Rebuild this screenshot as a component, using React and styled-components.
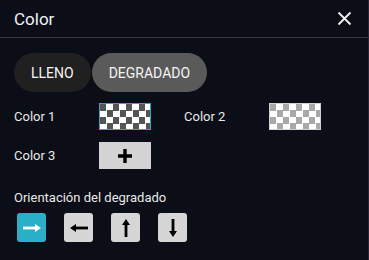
import React, { useState } from "react";
import styled, { createGlobalStyle } from "styled-components";

const GlobalStyle = createGlobalStyle`
  html, body {
    margin: 0;
    padding: 0;
    background: #0b0e17;
  }
  body {
    font-family: Roboto, "Liberation Sans", sans-serif;
    color: #ececec;
  }
`;

const Panel = styled.section`
  width: 368px;
  height: 260px;
  background: #0b0e17;
  border-right: 1px solid #2a2536;
  box-sizing: content-box;
`;

const Header = styled.header`
  height: 37px;
  display: flex;
  align-items: center;
  justify-content: space-between;
  padding: 0 14px;
  border-bottom: 1px solid #3b3b3b;
`;

const Title = styled.h1`
  margin: 0;
  font-size: 17px;
  font-weight: 400;
  color: #f2f2f2;
`;

const CloseBtn = styled.button`
  border: none;
  background: none;
  padding: 0;
  margin-right: 1px;
  width: 16px;
  height: 16px;
  cursor: pointer;
  display: flex;
`;

const Body = styled.div`
  padding: 15px 14px 0;
`;

const Tabs = styled.div`
  display: flex;
  margin-bottom: 11px;
`;

const Tab = styled.button`
  height: 39px;
  padding: 0 17px;
  border: none;
  border-radius: 20px;
  font-family: inherit;
  font-size: 14px;
  color: #f4f4f4;
  background: ${(p) => (p.active ? "#5a5a5a" : "#202020")};
  cursor: pointer;
  & + & {
    margin-left: 1px;
  }
`;

const Grid = styled.div`
  display: grid;
  grid-template-columns: 85px 85px 85px 52px;
  row-gap: 12px;
  align-items: center;
`;

const Label = styled.span`
  font-size: 13px;
  color: #e8e8e8;
`;

const Swatch = styled.div`
  width: 52px;
  height: 27px;
  box-sizing: border-box;
  border: 1px solid ${(p) => p.border};
  background: conic-gradient(
      #fff 0 25%,
      ${(p) => p.dark} 0 50%,
      #fff 0 75%,
      ${(p) => p.dark} 0
    )
    0 0 / 13px 13px;
`;

const AddBtn = styled.button`
  width: 52px;
  height: 27px;
  border: none;
  background: #d3d3d3;
  padding: 0;
  display: flex;
  align-items: center;
  justify-content: center;
  cursor: pointer;
`;

const Section = styled.div`
  margin-top: 21px;
`;

const SectionTitle = styled.div`
  font-size: 13px;
  color: #e8e8e8;
  margin-bottom: 8px;
`;

const Directions = styled.div`
  display: flex;
  gap: 18px;
  padding-left: 3px;
`;

const DirBtn = styled.button`
  width: 29px;
  height: 29px;
  border: none;
  border-radius: 3px;
  padding: 0;
  background: ${(p) => (p.active ? "#2aafc8" : "#d6d6d6")};
  display: flex;
  align-items: center;
  justify-content: center;
  cursor: pointer;
`;

const Arrow = ({ rotate, color }) => (
  <svg width="20" height="20" viewBox="0 0 20 20" style={{ transform: `rotate(${rotate}deg)` }}>
    <rect x="1" y="8.6" width="13" height="2.8" fill={color} />
    <path d="M13 6 L19 10 L13 14 Z" fill={color} />
  </svg>
);

const dirs = [0, 180, 270, 90];

export default function App() {
  const [mode, setMode] = useState("degradado");
  const [dir, setDir] = useState(0);

  return (
    <>
      <GlobalStyle />
      <Panel>
        <Header>
          <Title>Color</Title>
          <CloseBtn aria-label="Cerrar">
            <svg width="15" height="15" viewBox="0 0 15 15">
              <path d="M1.5 1.5 L13.5 13.5 M13.5 1.5 L1.5 13.5" stroke="#f2f2f2" strokeWidth="1.8" />
            </svg>
          </CloseBtn>
        </Header>
        <Body>
          <Tabs>
            <Tab active={mode === "lleno"} onClick={() => setMode("lleno")}>
              LLENO
            </Tab>
            <Tab active={mode === "degradado"} onClick={() => setMode("degradado")}>
              DEGRADADO
            </Tab>
          </Tabs>
          <Grid>
            <Label>Color 1</Label>
            <Swatch border="#2aa8c4" dark="#555" />
            <Label>Color 2</Label>
            <Swatch border="#d0d0d0" dark="#a8a8a8" />
            <Label>Color 3</Label>
            <AddBtn aria-label="Añadir color">
              <svg width="14" height="14" viewBox="0 0 14 14">
                <path d="M5.3 0 H8.7 V5.3 H14 V8.7 H8.7 V14 H5.3 V8.7 H0 V5.3 H5.3 Z" fill="#000" />
              </svg>
            </AddBtn>
          </Grid>
          <Section>
            <SectionTitle>Orientación del degradado</SectionTitle>
            <Directions>
              {dirs.map((r) => (
                <DirBtn key={r} active={dir === r} onClick={() => setDir(r)}>
                  <Arrow rotate={r} color={dir === r ? "#fff" : "#000"} />
                </DirBtn>
              ))}
            </Directions>
          </Section>
        </Body>
      </Panel>
    </>
  );
}
